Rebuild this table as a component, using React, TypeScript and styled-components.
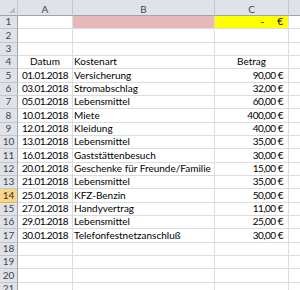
import styled, { createGlobalStyle } from "styled-components"

const GlobalStyle = createGlobalStyle`
  html, body {
    margin: 0;
    padding: 0;
    background: #ffffff;
  }
`

type Row = [string, string, string]

const rows: Row[] = [
  ["", "", ""],
  ["", "", ""],
  ["", "", ""],
  ["Datum", "Kostenart", "Betrag"],
  ["01.01.2018", "Versicherung", "90,00"],
  ["03.01.2018", "Stromabschlag", "32,00"],
  ["05.01.2018", "Lebensmittel", "60,00"],
  ["10.01.2018", "Miete", "400,00"],
  ["12.01.2018", "Kleidung", "40,00"],
  ["13.01.2018", "Lebensmittel", "35,00"],
  ["16.01.2018", "Gaststättenbesuch", "30,00"],
  ["20.01.2018", "Geschenke für Freunde/Familie", "15,00"],
  ["21.01.2018", "Lebensmittel", "35,00"],
  ["25.01.2018", "KFZ-Benzin", "50,00"],
  ["27.01.2018", "Handyvertrag", "11,00"],
  ["29.01.2018", "Lebensmittel", "25,00"],
  ["30.01.2018", "Telefonfestnetzanschluß", "30,00"],
  ["", "", ""],
  ["", "", ""],
  ["", "", ""],
  ["", "", ""],
]

const ACTIVE_ROW = 14

// Tabellenblatt mit Zeilen- und Spaltenköpfen
const App = () => {
  return (
    <>
      <GlobalStyle />
      <Sheet>
        <Corner>
          <CornerMark />
        </Corner>
        <ColHeader>A</ColHeader>
        <ColHeader>B</ColHeader>
        <ColHeader>C</ColHeader>
        <ColHeader $last />
        {rows.map(([date, kind, amount], index) => {
          const n = index + 1
          const isHeading = n === 4
          return [
            <RowHeader key={`h${n}`} $active={n === ACTIVE_ROW}>
              {n}
            </RowHeader>,
            <Cell key={`a${n}`} $align="center" $tight={!isHeading}>
              {date}
            </Cell>,
            <Cell key={`b${n}`} $fill={n === 1 ? "#e6b8b7" : undefined}>
              {kind}
            </Cell>,
            n === 1 ? (
              <Cell key={`c${n}`} $align="right" $fill="#ffff00">
                <Dash>-</Dash>€
              </Cell>
            ) : (
              <Cell
                key={`c${n}`}
                $align={isHeading ? "center" : "right"}
                $tight={!isHeading}
              >
                {amount && (isHeading ? amount : `${amount} €`)}
              </Cell>
            ),
            <Cell key={`d${n}`} $last />,
          ]
        })}
      </Sheet>
    </>
  )
}

export default App

const Sheet = styled.div`
  display: grid;
  grid-template-columns: 18px 55px 142px 74px 1fr;
  grid-template-rows: 16px;
  grid-auto-rows: 13.33px;
  width: 300px;
  height: 290px;
  overflow: hidden;
  font-family: Lato, "Open Sans", sans-serif;
  font-size: 10px;
  color: #000000;
  background: #ffffff;
`

const Corner = styled.div`
  position: relative;
  box-sizing: border-box;
  background: #dfe3e8;
  border-right: 1px solid #c3c7cc;
  border-bottom: 1px solid #9ea4ab;
`

const CornerMark = styled.div`
  position: absolute;
  right: 2px;
  bottom: 2px;
  width: 0;
  height: 0;
  border-left: 6px solid transparent;
  border-bottom: 6px solid #b9bec4;
`

const ColHeader = styled.div<{ $last?: boolean }>`
  display: flex;
  align-items: center;
  justify-content: center;
  box-sizing: border-box;
  padding-top: 2px;
  background: #dfe3e8;
  border-right: ${({ $last }) => ($last ? "none" : "1px solid #c3c7cc")};
  border-bottom: 1px solid #9ea4ab;
  color: #3b4656;
  font-size: 10px;
`

const RowHeader = styled.div<{ $active?: boolean }>`
  display: flex;
  align-items: flex-end;
  justify-content: center;
  box-sizing: border-box;
  padding-bottom: 1px;
  background: ${({ $active }) => ($active ? "#f9d58a" : "#dfe3e8")};
  border-right: 1px solid #9ea4ab;
  border-bottom: 1px solid ${({ $active }) => ($active ? "#e8b456" : "#c3c7cc")};
  color: ${({ $active }) => ($active ? "#3a2f10" : "#3b4656")};
  font-size: 10px;
`

const Cell = styled.div<{
  $align?: "left" | "center" | "right"
  $fill?: string
  $last?: boolean
  $tight?: boolean
}>`
  display: flex;
  align-items: flex-end;
  justify-content: ${({ $align }) =>
    $align === "center" ? "center" : $align === "right" ? "flex-end" : "flex-start"};
  box-sizing: border-box;
  padding: 0 ${({ $align }) => ($align === "right" ? "5px" : "1px")} 1px;
  background: ${({ $fill }) => $fill ?? "#ffffff"};
  border-right: ${({ $last }) => ($last ? "none" : "1px solid #dadcdd")};
  border-bottom: 1px solid #dadcdd;
  letter-spacing: ${({ $tight }) => ($tight ? "-0.5px" : "normal")};
  white-space: nowrap;
  overflow: visible;
`

const Dash = styled.span`
  margin-right: 13px;
`
